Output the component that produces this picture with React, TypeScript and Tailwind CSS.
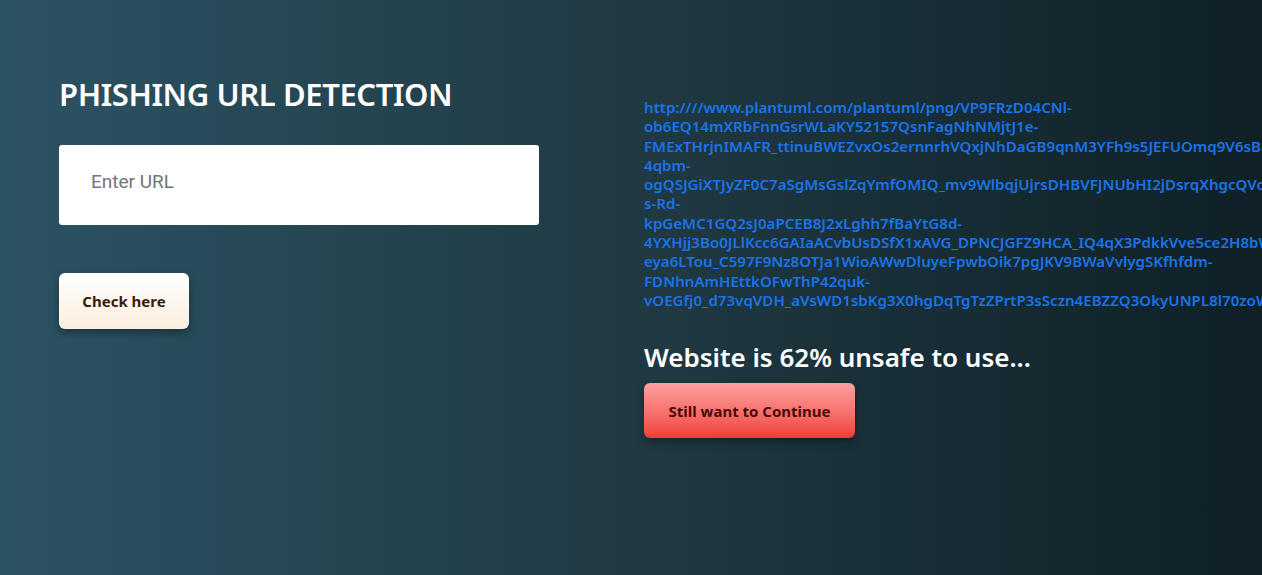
import React from "react";

const urlLines = [
  "http:////www.plantuml.com/plantuml/png/VP9FRzD04CNl-",
  "ob6EQ14mXRbFnnGsrWLaKY52157QsnFagNhNMjtJ1e-",
  "FMExTHrjnIMAFR_ttinuBWEZvxOs2ernnrhVQxjNhDaGB9qnM3YFh9s5JEFUOmq9V6sB8qLp-",
  "4qbm-",
  "ogQSJGiXTJyZF0C7aSgMsGslZqYmfOMIQ_mv9WlbqjUjrsDHBVFJNUbHI2jDsrqXhgcQVd3k-",
  "s-Rd-",
  "kpGeMC1GQ2sJ0aPCEB8J2xLghh7fBaYtG8d-",
  "4YXHjj3Bo0JLlKcc6GAIaACvbUsDSfX1xAVG_DPNCJGFZ9HCA_IQ4qX3PdkkVve5ce2H8bW1-",
  "eya6LTou_C597F9Nz8OTJa1WioAWwDluyeFpwbOik7pgJKV9BWaVvlygSKfhfdm-",
  "FDNhnAmHEttkOFwThP42quk-",
  "vOEGfj0_d73vqVDH_aVsWD1sbKg3X0hgDqTgTzZPrtP3sSczn4EBZZQ3OkyUNPL8l70zoW",
];

export default function App() {
  return (
    <div
      className="flex h-[575px] w-full overflow-hidden bg-gradient-to-r from-[#2c5364] via-[#203a43] to-[#0f2027]"
      style={{ fontFamily: '"Noto Sans", "Open Sans", sans-serif' }}
    >
      <div className="w-[644px] shrink-0 pl-[59px] pt-[72px]">
        <h1 className="text-[31px] font-semibold leading-[44px] text-white tracking-[-0.4px]">
          PHISHING URL DETECTION
        </h1>
        <div className="mt-[29px] flex h-[80px] w-[480px] items-center rounded-[3px] bg-white pb-[6px] pl-[32px]">
          <input
            type="text"
            placeholder="Enter URL"
            className="w-full bg-transparent text-[19px] text-gray-800 outline-none placeholder:text-[#757575]"
            style={{ fontFamily: "Roboto, sans-serif" }}
          />
        </div>
        <button className="mt-[48px] flex h-[56px] w-[130px] items-center justify-center rounded-[6px] bg-gradient-to-b from-white to-[#fbefdf] text-[15px] font-bold text-[#3b1a05] shadow-[0_4px_8px_rgba(0,0,0,0.35)]">
          Check here
        </button>
      </div>
      <div className="min-w-0 flex-1 pt-[98px]">
        <div className="text-[15.1px] font-semibold leading-[19.3px] text-[#1a73e8]">
          {urlLines.map((l, i) => (
            <div key={i} className="whitespace-nowrap">
              {l}
            </div>
          ))}
        </div>
        <h2 className="mt-[30px] text-[26px] font-semibold leading-[34px] text-white">
          Website is 62% unsafe to use...
        </h2>
        <button className="mt-[9px] flex h-[55px] w-[211px] items-center justify-center rounded-[6px] bg-gradient-to-b from-[#fca0a0] to-[#ef3b3b] text-[15px] font-bold text-[#4a0a0a] shadow-[0_4px_8px_rgba(0,0,0,0.35)]">
          Still want to Continue
        </button>
      </div>
    </div>
  );
}
